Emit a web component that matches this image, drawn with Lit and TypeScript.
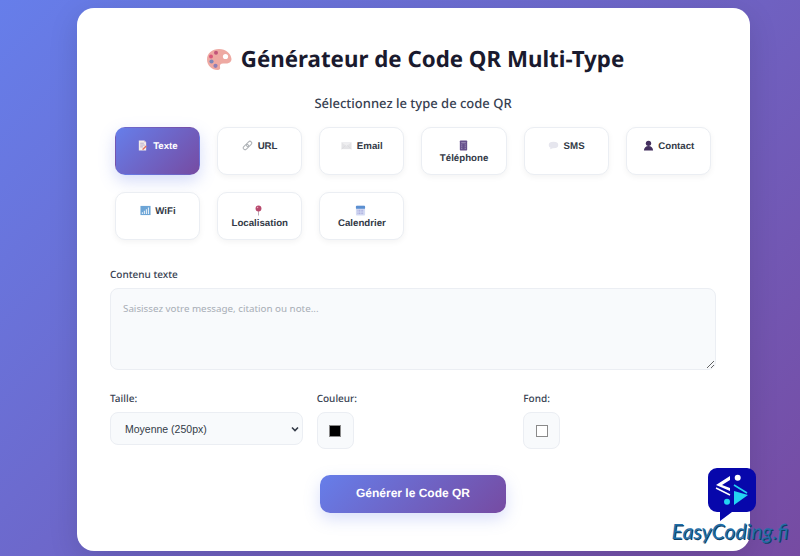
import { LitElement, html, css, svg } from "lit";
import { customElement } from "lit/decorators.js";

const icons: Record<string, unknown> = {
  memo: svg`<svg class="ic" viewBox="0 0 12 12"><path d="M2 .5h6l2 2v9H2z" fill="#f3ecea"/><path d="M8 .5l2 2H8z" fill="#cdb6c8"/><path d="M3.500 3.500h4M3.500 5.500h5M3.500 7.500h3" stroke="#a89ac2" stroke-width=".8"/><path d="M5.500 10l4-4 1.200 1.200-4 3.800z" fill="#e0705c"/></svg>`,
  link: svg`<svg class="ic" viewBox="0 0 12 12" fill="none" stroke="#aeb2b6" stroke-width="1.100"><g transform="rotate(-45 6 6)"><rect x=".3" y="4" width="6.700" height="4" rx="2"/><rect x="5" y="4" width="6.700" height="4" rx="2"/></g></svg>`,
  mail: svg`<svg class="ic" viewBox="0 0 12 12"><rect x=".5" y="2.500" width="11" height="7.500" fill="#e3e3e6"/><path d="M.5 2.500L6 6.500l5.500-4" fill="#eeeef0"/><path d="M.5 10L5 6M11.500 10L7 6" stroke="#d2d2d6" stroke-width=".5"/></svg>`,
  phone: svg`<svg class="ic" viewBox="0 0 12 12"><rect x="2" y=".5" width="8" height="11" rx=".8" fill="#66508c"/><path d="M3.500 3h5M3.500 5.400h1.200M7.300 5.400h1.200M3.500 7.400h1.200M7.300 7.400h1.200M3.500 9.400h1.200M7.300 9.400h1.200" stroke="#b9aecd" stroke-width=".8"/></svg>`,
  sms: svg`<svg class="ic" viewBox="0 0 12 12"><ellipse cx="6" cy="5.500" rx="5.200" ry="3.600" fill="#e6e6ee"/><path d="M3 8l-.8 2.200L5.400 9z" fill="#e6e6ee"/></svg>`,
  user: svg`<svg class="ic" viewBox="0 0 12 12"><circle cx="6" cy="3.600" r="2.900" fill="#44305f"/><path d="M1 11.500c0-3 2.200-5 5-5s5 2 5 5z" fill="#44305f"/></svg>`,
  wifi: svg`<svg class="ic" viewBox="0 0 12 12"><rect x=".5" y="1" width="11" height="10" fill="#6da5d6"/><path d="M2 9.800h1.200V8H2zM4.200 9.800h1.200V6.400H4.200zM6.400 9.800h1.200V4.600H6.400zM8.600 9.800h1.200V2.800H8.600z" fill="#e6eff8"/></svg>`,
  pin: svg`<svg class="ic" viewBox="0 0 12 12"><path d="M6 6.500v5" stroke="#b9a2ae" stroke-width="1"/><circle cx="6" cy="3.800" r="3.200" fill="#b84a6e"/><circle cx="5" cy="2.800" r=".8" fill="#e9a5bb"/></svg>`,
  cal: svg`<svg class="ic" viewBox="0 0 12 12"><rect x="1" y=".8" width="10" height="10.600" rx="1" fill="#d4dbf3"/><rect x="1" y=".8" width="10" height="3.400" rx="1" fill="#5a8fd0"/><path d="M2.800 5.800h6.400M2.800 7.600h6.400M2.800 9.400h6.400" stroke="#9c9ad4" stroke-width=".9" stroke-dasharray="1 .7"/></svg>`,
};

const types = [
  ["memo", "Texte"], ["link", "URL"], ["mail", "Email"], ["phone", "Téléphone"], ["sms", "SMS"],
  ["user", "Contact"], ["wifi", "WiFi"], ["pin", "Localisation"], ["cal", "Calendrier"],
];

@customElement("app-root")
export class AppRoot extends LitElement {
  static styles = css`
    :host { display: block; width: 800px; height: 556px; overflow: hidden; position: relative;
      background: linear-gradient(135deg, #667eea 0%, #764ba2 100%);
      font-family: "Noto Sans", sans-serif; text-rendering: geometricPrecision; }
    * { box-sizing: border-box; }
    .card { margin: 8px 0 0 77px; width: 673px; height: 543px; background: #fff; border-radius: 17px;
      padding: 33px 34px 33px 33px; box-shadow: 0 8px 30px rgba(0,0,0,.12); display: flex; flex-direction: column; }
    h1 { margin: 0; height: 35px; padding-left: 4px; display: flex; justify-content: center; align-items: center; gap: 9px;
      font-size: 22.3px; font-weight: 700; color: #1a1a2e; line-height: 35px; }
    .palette { width: 26px; height: 26px; display: block; }
    h2 { margin: 17px 0 0; text-align: center; font-size: 13px; font-weight: 500; color: #374151; line-height: 20px; }
    .types { margin-top: 14px; padding: 0 5px; display: grid; grid-template-columns: repeat(6, minmax(0, 1fr)); gap: 17px; }
    .type { border: 1px solid #ebeef3; border-radius: 10px; background: #fff; padding: 0; height: 48px;
      display: flex; align-items: flex-start; justify-content: center;
      font: 700 9.7px/12px "Liberation Sans", Arial, sans-serif; text-rendering: geometricPrecision; color: #333a47;
      box-shadow: 0 2px 6px rgba(0,0,0,.05); }
    .type span { display: block; padding: 11.5px 12px 0; text-align: center; width: 100%; }
    .type.active { border-color: transparent; color: #fff;
      background: linear-gradient(135deg, #667eea, #764ba2); box-shadow: 0 6px 16px rgba(102,126,234,.28); }
    .ic { width: 11px; height: 11px; vertical-align: -2px; margin-right: 2px; }
    label { display: block; font-size: 10px; line-height: 14px; color: #374151; font-weight: 500; }
    .content-label { margin-top: 27px; }
    textarea { display: block; width: 100%; height: 82px; margin-top: 7px; padding: 12.5px 12px; resize: vertical;
      background: #f8fafc; border: 1px solid #ebeef3; border-radius: 8px; font: 9.8px/14px "Noto Sans", sans-serif; outline: none; }
    textarea::placeholder { color: #a7adb5; }
    .opts { margin-top: 21px; display: grid; grid-template-columns: repeat(3, minmax(0, 1fr)); gap: 14px; }
    .opts label { margin-bottom: 7px; }
    .sel { position: relative; }
    select { display: block; width: 100%; height: 33px; padding: 0 14px; background: #f8fafc; border: 1px solid #ebeef3;
      appearance: none; border-radius: 8px; font: 10.5px "Liberation Sans", Arial, sans-serif; color: #333a47; outline: none; }
    .chev { position: absolute; right: 2px; top: 12px; width: 10px; height: 10px; margin-right: 1px; pointer-events: none; }
    .swatch { width: 37px; height: 37px; border: 1px solid #ebeef3; border-radius: 8px; background: #f8fafc;
      display: flex; align-items: center; justify-content: center; }
    .swatch i { display: block; width: 12px; height: 12px; border: 1px solid #8a8a8a; }
    .go-wrap { margin-top: 26px; display: flex; justify-content: center; }
    .go { width: 186px; height: 38px; border: 0; border-radius: 10px; color: #fff; padding: 0 0 2px;
      font: 700 12px "Liberation Sans", Arial, sans-serif; text-rendering: geometricPrecision;
      background: linear-gradient(135deg, #667eea, #764ba2); box-shadow: 0 6px 16px rgba(102,126,234,.25); }
    .brand { position: absolute; left: 668px; top: 468px; width: 124px; display: flex; flex-direction: column; align-items: center; }
    .brand svg { display: block; width: 48px; height: 54px; margin-left: 4px; }
    .brand span { margin-top: -1px; font: italic 400 21px/22px Lato, sans-serif; white-space: nowrap;
      color: #1f6ea8; text-shadow: 1px 1px 0 #0f3f63; }
  `;

  render() {
    return html`
      <div class="card">
        <h1>
          <svg class="palette" viewBox="0 0 26 26">
            <path d="M13 3C6 3 1 7.500 1 13.500S6 24 11.500 24c2.500 0 3-1.500 2.500-3-.5-2 .5-3.500 3-3.500h3c3 0 5.500-1.500 5.500-4.500C25 7.500 20 3 13 3z" fill="#eea9a2"/>
            <circle cx="19.500" cy="10.500" r="2.600" fill="#fff"/>
            <circle cx="10" cy="6.800" r="2" fill="#c2557a"/>
            <circle cx="5" cy="10.500" r="2" fill="#d9587a"/>
            <circle cx="5.500" cy="15.500" r="2.100" fill="#7d86b8"/>
            <circle cx="9.500" cy="19.800" r="2.100" fill="#8e7fb5"/>
          </svg>
          Générateur de Code QR Multi-Type
        </h1>
        <h2>Sélectionnez le type de code QR</h2>
        <div class="types">
          ${types.map(([i, t], n) => html`<button class="type ${n === 0 ? "active" : ""}"><span>${icons[i]} ${t}</span></button>`)}
        </div>
        <label class="content-label">Contenu texte</label>
        <textarea placeholder="Saisissez votre message, citation ou note..."></textarea>
        <div class="opts">
          <div>
            <label>Taille:</label>
            <div class="sel">
              <select><option>Moyenne (250px)</option></select>
              <svg class="chev" viewBox="0 0 10 10" fill="none" stroke="#333a47" stroke-width="1.600"><path d="M2 3.500l3 3 3-3"/></svg>
            </div>
          </div>
          <div><label>Couleur:</label><div class="swatch"><i style="background:#000000"></i></div></div>
          <div><label>Fond:</label><div class="swatch"><i style="background:#ffffff"></i></div></div>
        </div>
        <div class="go-wrap"><button class="go">Générer le Code QR</button></div>
      </div>
      <div class="brand">
        <svg viewBox="0 0 48 54">
          <path d="M9 0h30a9 9 0 0 1 9 9v26a9 9 0 0 1-9 9H24L12 53v-9H9a9 9 0 0 1-9-9V9a9 9 0 0 1 9-9z" fill="#0707ab"/>
          <path d="M22 8L8 17l14 6v-3l-8-3 8-5z" fill="#fff"/>
          <path d="M8 20l14 7" fill="none" stroke="#fff" stroke-width="1.500"/>
          <circle cx="29.700" cy="9.700" r="3" fill="#fff"/>
          <path d="M26 23l14 4-14 10z" fill="#23d3f2"/>
          <path d="M26 17l13 8" fill="none" stroke="#23d3f2" stroke-width="1.600"/>
          <circle cx="19" cy="33.700" r="3" fill="#23d3f2"/>
        </svg>
        <span>EasyCoding.fi</span>
      </div>
    `;
  }
}
